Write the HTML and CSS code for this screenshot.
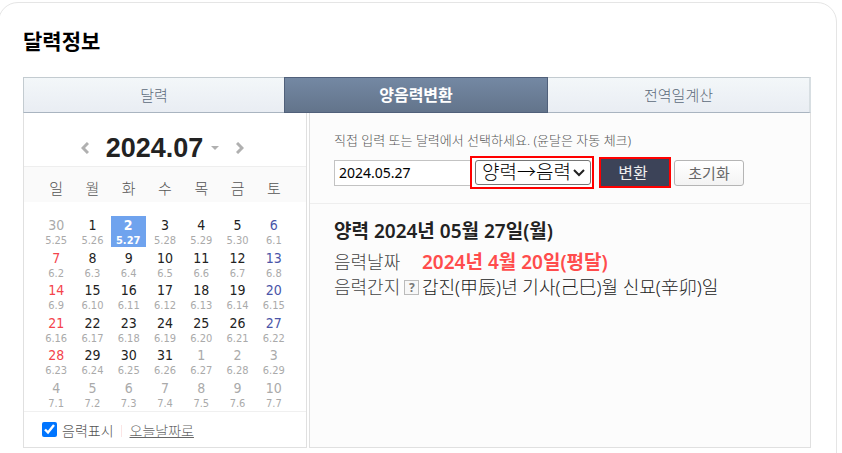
FILE: index.html
```html
<!DOCTYPE html>
<html lang="ko">
<head>
    <meta charset="UTF-8">
    <meta name="viewport" content="width=device-width, initial-scale=1.0">
    <title>달력정보</title>
    <link rel="stylesheet" href="styles.css">
</head>
<body>
    <section class="card">
        <h1>달력정보</h1>
        <nav class="tabs">
            <a href="#calendar">달력</a>
            <a href="#convert" class="on">양음력변환</a>
            <a href="#discharge">전역일계산</a>
        </nav>
        <div class="content">
            <div class="calendar" id="calendar">
                <div class="month">
                    <button type="button" class="arrow" aria-label="이전달"><svg width="8" height="12" viewBox="0 0 8 12"><path d="M7 1 2 6l5 5"/></svg></button>
                    <button type="button" class="current">2024.07<svg width="8" height="4" viewBox="0 0 8 4"><path d="M0 0h8L4 4z"/></svg></button>
                    <button type="button" class="arrow" aria-label="다음달"><svg width="8" height="12" viewBox="0 0 8 12"><path d="m1 1 5 5-5 5"/></svg></button>
                </div>
                <table>
                    <thead>
                        <tr><th>일</th><th>월</th><th>화</th><th>수</th><th>목</th><th>금</th><th>토</th></tr>
                    </thead>
                    <tbody>
                        <tr><td class="off">30<small>5.25</small></td><td>1<small>5.26</small></td><td class="today">2<small>5.27</small></td><td>3<small>5.28</small></td><td>4<small>5.29</small></td><td>5<small>5.30</small></td><td class="sat">6<small>6.1</small></td></tr>
                        <tr><td class="sun">7<small>6.2</small></td><td>8<small>6.3</small></td><td>9<small>6.4</small></td><td>10<small>6.5</small></td><td>11<small>6.6</small></td><td>12<small>6.7</small></td><td class="sat">13<small>6.8</small></td></tr>
                        <tr><td class="sun">14<small>6.9</small></td><td>15<small>6.10</small></td><td>16<small>6.11</small></td><td>17<small>6.12</small></td><td>18<small>6.13</small></td><td>19<small>6.14</small></td><td class="sat">20<small>6.15</small></td></tr>
                        <tr><td class="sun">21<small>6.16</small></td><td>22<small>6.17</small></td><td>23<small>6.18</small></td><td>24<small>6.19</small></td><td>25<small>6.20</small></td><td>26<small>6.21</small></td><td class="sat">27<small>6.22</small></td></tr>
                        <tr><td class="sun">28<small>6.23</small></td><td>29<small>6.24</small></td><td>30<small>6.25</small></td><td>31<small>6.26</small></td><td class="off">1<small>6.27</small></td><td class="off">2<small>6.28</small></td><td class="off">3<small>6.29</small></td></tr>
                        <tr><td class="off">4<small>7.1</small></td><td class="off">5<small>7.2</small></td><td class="off">6<small>7.3</small></td><td class="off">7<small>7.4</small></td><td class="off">8<small>7.5</small></td><td class="off">9<small>7.6</small></td><td class="off">10<small>7.7</small></td></tr>
                    </tbody>
                </table>
                <div class="options">
                    <input type="checkbox" id="lunar" checked>
                    <label for="lunar">음력표시</label>
                    <a href="#today">오늘날짜로</a>
                </div>
            </div>
            <div class="convert" id="convert">
                <form class="search">
                    <label class="guide" for="date">직접 입력 또는 달력에서 선택하세요. (윤달은 자동 체크)</label>
                    <div class="fields">
                        <input type="text" id="date" value="2024.05.27">
                        <div class="mark">
                            <select aria-label="변환 방식">
                                <option>양력→음력</option>
                                <option>음력→양력</option>
                            </select>
                            <svg width="12" height="8" viewBox="0 0 12 8"><path d="m1 1 5 5 5-5"/></svg>
                        </div>
                        <button type="button" class="submit">변환</button>
                        <button type="reset" class="reset">초기화</button>
                    </div>
                </form>
                <div class="result">
                    <h2>양력 2024년 05월 27일(월)</h2>
                    <dl>
                        <dt>음력날짜</dt>
                        <dd class="lunar">2024년 4월 20일(평달)</dd>
                        <dt>음력간지<button type="button" class="help">?</button></dt>
                        <dd>갑진(甲辰)년 기사(己巳)월 신묘(辛卯)일</dd>
                    </dl>
                </div>
            </div>
        </div>
    </section>
</body>
</html>
```
FILE: styles.css
```css
* {
    box-sizing: border-box;
}
body {
    margin: 0;
    background: #fff;
    font-family: "Noto Sans", "Noto Sans CJK KR", sans-serif;
    font-size: 14px;
    color: #222;
    overflow: hidden;
}
button, input, select {
    font-family: inherit;
    margin: 0;
}
button {
    padding: 0;
    border: 0;
    background: none;
}
.card {
    margin: 2px 5px 0 -2px;
    padding: 23px 25px 24px 24px;
    border: 1px solid #e5e5e5;
    border-radius: 20px;
}
h1 {
    margin: 0 0 20px;
    font-size: 21px;
    font-weight: 600;
    line-height: 31px;
    color: #000;
}
.tabs {
    display: grid;
    grid-template-columns: 261fr 264fr 263fr;
    height: 36px;
}
.tabs a {
    border: 1px solid #c3cbd0;
    border-width: 1px 0;
    border-bottom-color: #a9b4c0;
    background: linear-gradient(#f3f7f9, #e9edf3);
    font-size: 15px;
    font-weight: 300;
    line-height: 34px;
    text-align: center;
    text-decoration: none;
    color: #5d6b7b;
}
.tabs a:first-child {
    border-left-width: 1px;
}
.tabs a:last-child {
    border-right: 2px solid #d7dee2;
}
.tabs .on {
    border: 1px solid #50607a;
    background: linear-gradient(#7488a3, #63748b);
    font-size: 16px;
    font-weight: 600;
    color: #fff;
}
.content {
    display: flex;
    gap: 2px;
}
.calendar {
    flex: 0 0 284px;
    border: 1px solid #e0e0e0;
    border-top: 0;
}
.month {
    display: flex;
    align-items: center;
    justify-content: center;
    gap: 17px;
    height: 53px;
    padding: 16px 5px 0 0;
}
.month svg {
    display: block;
}
.arrow path {
    fill: none;
    stroke: #b0b0b0;
    stroke-width: 3;
}
.current {
    display: flex;
    align-items: center;
    gap: 8px;
    font-family: "Liberation Sans", sans-serif;
    font-size: 27px;
    font-weight: 700;
    line-height: 30px;
    color: #222;
}
.current path {
    fill: #b0b0b0;
}
table {
    width: 100%;
    border-collapse: collapse;
    table-layout: fixed;
}
thead, tbody {
    display: block;
    padding: 0 14px;
}
thead {
    height: 36px;
    border-top: 1px solid #eee;
    background: #fafafa;
}
tbody {
    padding-top: 14px;
    font-family: "DejaVu Sans Condensed", "DejaVu Sans", sans-serif;
}
tr {
    display: grid;
    grid-template-columns: repeat(7, 1fr);
}
th {
    padding: 5px 0 0;
    font-size: 15px;
    font-weight: 300;
    line-height: 32px;
    color: #555;
}
td {
    margin-bottom: 2px;
    padding: 1px 0 0;
    font-size: 14px;
    line-height: 17px;
    text-align: center;
}
tbody tr:nth-child(even) td {
    margin-bottom: 1px;
}
small {
    display: block;
    font-size: 11px;
    line-height: 13px;
    color: #aaa;
}
.off {
    color: #aaa;
}
.sun {
    color: #f4444c;
}
.sat {
    color: #4a55a8;
}
.today {
    margin-right: 1px;
    background: #6fa3ee;
    font-weight: 700;
    color: #fff;
}
.today small {
    color: #fff;
}
.options {
    display: flex;
    align-items: center;
    height: 36px;
    padding: 0 18px;
    border-top: 1px solid #f0f0f0;
    font-size: 14px;
    font-weight: 300;
    color: #555;
}
.options input {
    width: 15px;
    height: 15px;
    margin-right: 5px;
    accent-color: #0075ff;
}
.options a {
    margin-left: 7px;
    padding-left: 9px;
    background: linear-gradient(#fbe5e5, #fbe5e5) 0 5px / 1px 12px no-repeat;
    color: #666;
}
.convert {
    flex: 1;
    border: 1px solid #e0e0e0;
    border-top: 0;
    background: #fcfcfc;
}
.search {
    padding: 17px 24px 15px;
    border-bottom: 1px solid #eee;
}
.guide {
    display: block;
    margin-bottom: 7px;
    font-size: 13px;
    font-weight: 300;
    line-height: 20px;
    color: #555;
}
.fields {
    display: flex;
    align-items: center;
    height: 31px;
}
.fields > input {
    width: 136px;
    height: 26px;
    padding: 0 4px;
    border: 1px solid #c3c3c3;
    border-right: 0;
    font-size: 14px;
    color: #000;
}
.mark {
    position: relative;
    flex: none;
    padding: 2px 1px 2px 3px;
    border: 2px solid #f00;
    background: #fff;
}
.mark select {
    display: block;
    width: 116px;
    height: 25px;
    padding: 0 20px 0 6px;
    appearance: none;
    border: 1px solid #767676;
    border-radius: 3px;
    background: #fff;
    font-size: 19px;
    font-weight: 300;
    line-height: 23px;
    color: #000;
}
.mark svg {
    position: absolute;
    top: 11px;
    right: 7px;
    pointer-events: none;
}
.mark path {
    fill: none;
    stroke: #222;
    stroke-width: 2;
}
.submit {
    width: 72px;
    height: 31px;
    margin: 0 3px 0 5px;
    padding-right: 4px;
    border: 2px solid #f00;
    background: #3c4358;
    font-size: 16px;
    line-height: 24px;
    color: #eee;
}
.reset {
    width: 70px;
    height: 26px;
    border: 1px solid #b5b5b5;
    border-radius: 3px;
    background: linear-gradient(#fff, #f3f3f3);
    font-size: 15px;
    line-height: 22px;
    color: #666;
}
.result {
    padding: 13px 24px;
}
h2 {
    margin: 0 0 5px;
    font-size: 19px;
    font-weight: 600;
    line-height: 28px;
}
dl {
    display: grid;
    grid-template-columns: 88px 1fr;
    margin: 0;
    font-size: 18px;
    font-weight: 300;
    line-height: 25px;
}
dt {
    display: flex;
    align-items: center;
    color: #444;
}
dd {
    margin: 0;
    color: #222;
}
dd.lunar {
    font-size: 19px;
    font-weight: 600;
    color: #ff4c4c;
}
.help {
    width: 15px;
    height: 15px;
    margin-left: 4px;
    border: 1px solid #bbb;
    background: #f7f7f7;
    font-size: 12px;
    font-weight: 700;
    line-height: 13px;
    color: #777;
}
```
